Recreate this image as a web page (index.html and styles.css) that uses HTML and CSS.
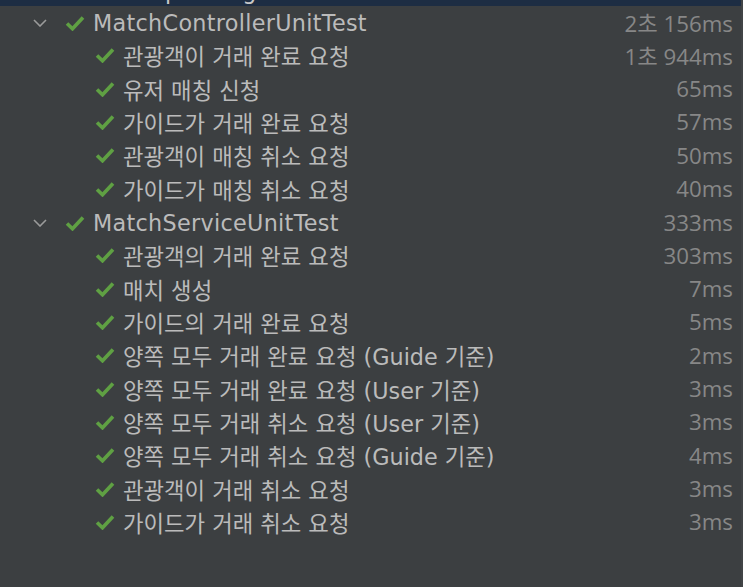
FILE: index.html
```html
<!DOCTYPE html>
<html lang="ko">
<head>
<meta charset="utf-8">
<title>Test Results</title>
<link rel="stylesheet" href="styles.css">
</head>
<body>
<div class="tree">
  <div class="selected"><div class="sel-text"><span>p</span><span>g</span></div></div>

  <div class="row group">
    <svg class="chev" viewBox="0 0 14 8"><path d="M1 1 L7 7 L13 1"/></svg>
    <svg class="check" viewBox="0 0 20 16"><path d="M2 8.5 L7.5 13.8 L18 2.5"/></svg>
    <span class="name">MatchControllerUnitTest</span><span class="time">2초 156ms</span>
  </div>
  <div class="row child"><svg class="check" viewBox="0 0 20 16"><path d="M2 8.5 L7.5 13.8 L18 2.5"/></svg><span class="name">관광객이 거래 완료 요청</span><span class="time">1초 944ms</span></div>
  <div class="row child"><svg class="check" viewBox="0 0 20 16"><path d="M2 8.5 L7.5 13.8 L18 2.5"/></svg><span class="name">유저 매칭 신청</span><span class="time">65ms</span></div>
  <div class="row child"><svg class="check" viewBox="0 0 20 16"><path d="M2 8.5 L7.5 13.8 L18 2.5"/></svg><span class="name">가이드가 거래 완료 요청</span><span class="time">57ms</span></div>
  <div class="row child"><svg class="check" viewBox="0 0 20 16"><path d="M2 8.5 L7.5 13.8 L18 2.5"/></svg><span class="name">관광객이 매칭 취소 요청</span><span class="time">50ms</span></div>
  <div class="row child"><svg class="check" viewBox="0 0 20 16"><path d="M2 8.5 L7.5 13.8 L18 2.5"/></svg><span class="name">가이드가 매칭 취소 요청</span><span class="time">40ms</span></div>

  <div class="row group">
    <svg class="chev" viewBox="0 0 14 8"><path d="M1 1 L7 7 L13 1"/></svg>
    <svg class="check" viewBox="0 0 20 16"><path d="M2 8.5 L7.5 13.8 L18 2.5"/></svg>
    <span class="name">MatchServiceUnitTest</span><span class="time">333ms</span>
  </div>
  <div class="row child"><svg class="check" viewBox="0 0 20 16"><path d="M2 8.5 L7.5 13.8 L18 2.5"/></svg><span class="name">관광객의 거래 완료 요청</span><span class="time">303ms</span></div>
  <div class="row child"><svg class="check" viewBox="0 0 20 16"><path d="M2 8.5 L7.5 13.8 L18 2.5"/></svg><span class="name">매치 생성</span><span class="time">7ms</span></div>
  <div class="row child"><svg class="check" viewBox="0 0 20 16"><path d="M2 8.5 L7.5 13.8 L18 2.5"/></svg><span class="name">가이드의 거래 완료 요청</span><span class="time">5ms</span></div>
  <div class="row child"><svg class="check" viewBox="0 0 20 16"><path d="M2 8.5 L7.5 13.8 L18 2.5"/></svg><span class="name">양쪽 모두 거래 완료 요청 (Guide 기준)</span><span class="time">2ms</span></div>
  <div class="row child"><svg class="check" viewBox="0 0 20 16"><path d="M2 8.5 L7.5 13.8 L18 2.5"/></svg><span class="name">양쪽 모두 거래 완료 요청 (User 기준)</span><span class="time">3ms</span></div>
  <div class="row child"><svg class="check" viewBox="0 0 20 16"><path d="M2 8.5 L7.5 13.8 L18 2.5"/></svg><span class="name">양쪽 모두 거래 취소 요청 (User 기준)</span><span class="time">3ms</span></div>
  <div class="row child"><svg class="check" viewBox="0 0 20 16"><path d="M2 8.5 L7.5 13.8 L18 2.5"/></svg><span class="name">양쪽 모두 거래 취소 요청 (Guide 기준)</span><span class="time">4ms</span></div>
  <div class="row child"><svg class="check" viewBox="0 0 20 16"><path d="M2 8.5 L7.5 13.8 L18 2.5"/></svg><span class="name">관광객이 거래 취소 요청</span><span class="time">3ms</span></div>
  <div class="row child"><svg class="check" viewBox="0 0 20 16"><path d="M2 8.5 L7.5 13.8 L18 2.5"/></svg><span class="name">가이드가 거래 취소 요청</span><span class="time">3ms</span></div>
</div>
</body>
</html>
```

FILE: styles.css
```css
html, body {
  margin: 0;
  padding: 0;
}
body {
  background: #3c3f41;
  color: #bbbbbb;
  font-family: "DejaVu Sans", "Noto Sans CJK KR", sans-serif;
  font-size: 22.3px;
  height: 587px;
  overflow: hidden;
}
.tree {
  display: flex;
  flex-direction: column;
  border-right: 2px solid #414446;
  height: 587px;
  box-sizing: border-box;
}
.selected {
  height: 6.3px;
  background: #1d2d43;
  overflow: hidden;
  flex: none;
}
.sel-text {
  display: flex;
  gap: 63px;
  padding-left: 165px;
  margin-top: -25px;
  line-height: 33px;
  color: #c8c8c8;
}
.row {
  display: flex;
  align-items: center;
  height: 33.33px;
  padding-right: 8px;
  flex: none;
  white-space: nowrap;
  box-sizing: border-box;
}
.group {
  padding-left: 33px;
}
.group .name {
  letter-spacing: 0.3px;
}
.child {
  padding-left: 95px;
  padding-bottom: 2px;
}
.chev {
  width: 14px;
  height: 8px;
  margin-right: 18px;
  flex: none;
}
.chev path {
  fill: none;
  stroke: #9b9b9b;
  stroke-width: 1.6;
}
.check {
  width: 20px;
  height: 16px;
  margin-right: 8px;
  flex: none;
}
.check path {
  fill: none;
  stroke: #5fa043;
  stroke-width: 3.6;
}
.name {
  flex: 1;
}
.time {
  color: #878787;
  font-family: "Open Sans", "Noto Sans CJK KR", sans-serif;
}
```
